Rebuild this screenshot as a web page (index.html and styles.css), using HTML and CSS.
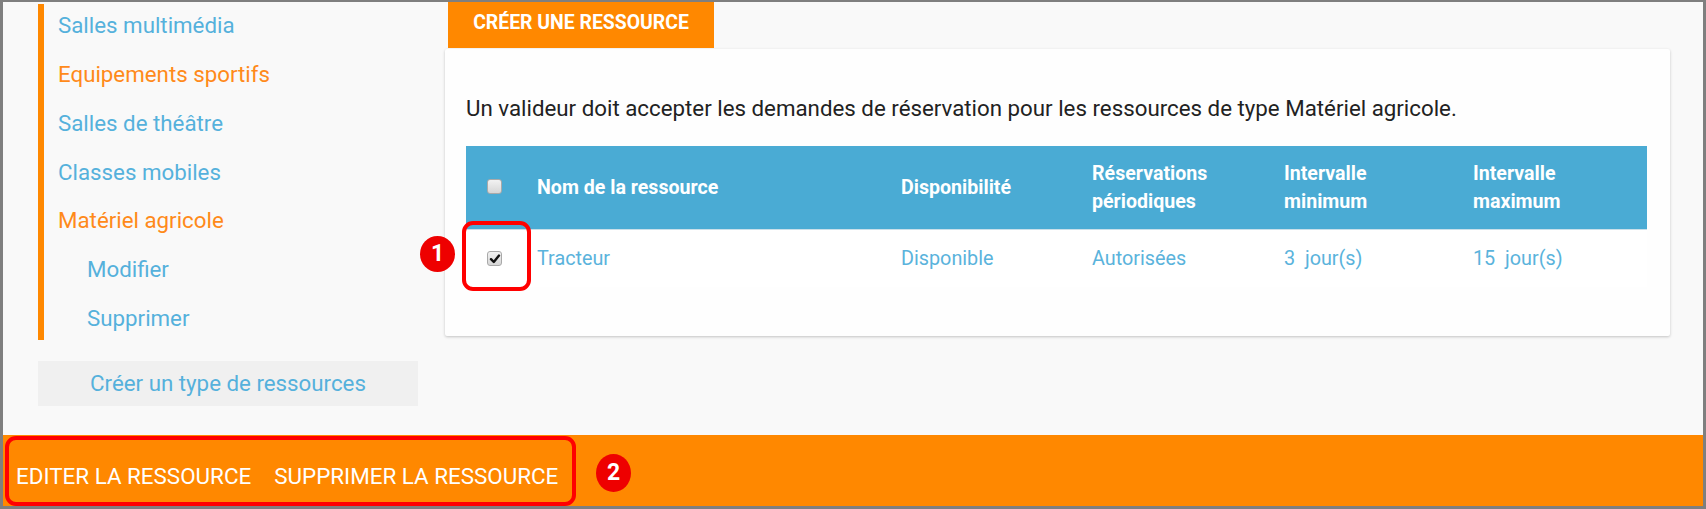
FILE: index.html
```html
<!DOCTYPE html>
<html lang="fr">
<head>
<meta charset="utf-8">
<title>Ressources</title>
<link rel="stylesheet" href="styles.css">
</head>
<body>
<div class="frame">
  <div class="main">
    <aside class="sidebar">
      <nav class="types">
        <a class="item">Salles multimédia</a>
        <a class="item active">Equipements sportifs</a>
        <a class="item">Salles de théâtre</a>
        <a class="item">Classes mobiles</a>
        <a class="item active">Matériel agricole</a>
        <a class="item sub">Modifier</a>
        <a class="item sub last">Supprimer</a>
      </nav>
      <div class="create-type">Créer un type de ressources</div>
    </aside>
    <section class="content">
      <div class="tab">CRÉER UNE RESSOURCE</div>
      <div class="card">
        <p class="desc">Un valideur doit accepter les demandes de réservation pour les ressources de type Matériel agricole.</p>
        <div class="table">
          <div class="row head">
            <div class="cell"><span class="check"></span></div>
            <div class="cell">Nom de la ressource</div>
            <div class="cell">Disponibilité</div>
            <div class="cell">Réservations<br>périodiques</div>
            <div class="cell">Intervalle<br>minimum</div>
            <div class="cell">Intervalle<br>maximum</div>
          </div>
          <div class="row body">
            <div class="cell"><span class="check checked"><svg viewBox="0 0 14 14" width="14" height="14"><path d="M3 7.2 L5.8 10 L11 3.6" fill="none" stroke="#111" stroke-width="2.4" stroke-linecap="round" stroke-linejoin="round"/></svg></span></div>
            <div class="cell">Tracteur</div>
            <div class="cell">Disponible</div>
            <div class="cell">Autorisées</div>
            <div class="cell">3&nbsp; jour(s)</div>
            <div class="cell">15&nbsp; jour(s)</div>
          </div>
        </div>
      </div>
    </section>
  </div>
  <footer class="actions">
    <span class="action">EDITER LA RESSOURCE</span>
    <span class="action">SUPPRIMER LA RESSOURCE</span>
  </footer>
  <div class="mark box1"></div>
  <div class="badge badge1">1</div>
  <div class="mark box2"></div>
  <div class="badge badge2">2</div>
</div>
</body>
</html>
```
FILE: styles.css
```css
* { box-sizing: border-box; }
html, body { margin: 0; padding: 0; }
body {
  font-family: Roboto, "Noto Sans", "Liberation Sans", sans-serif;
  background: #7f7f7f;
}
.frame {
  position: relative;
  width: 1706px;
  height: 509px;
  border-top: 2px solid #7f7f7f;
  border-left: 3px solid #7f7f7f;
  border-right: 3px solid #7f7f7f;
  border-bottom: 3px solid #7f7f7f;
  background: #f9f9f9;
  display: flex;
  flex-direction: column;
}
.main {
  height: 433px;
  display: flex;
  background: #f9f9f9;
}
.sidebar {
  width: 415px;
  padding-left: 35px;
  flex: none;
}
.types {
  margin-top: 2px;
  border-left: 6px solid #ff8800;
  display: flex;
  flex-direction: column;
}
.item {
  display: block;
  height: 43px;
  line-height: 43px;
  margin-bottom: 5.85px;
  padding-left: 14px;
  font-size: 22.3px;
  color: #55b1dc;
  white-space: nowrap;
}
.item.last { margin-bottom: 0; }
.item.active { color: #ff8a1a; }
.item.sub { padding-left: 43px; }
.create-type {
  margin-top: 21px;
  height: 45px;
  line-height: 45px;
  background: #f0f0f0;
  text-align: center;
  font-size: 22.3px;
  color: #55b1dc;
}
.content {
  margin-left: 27px;
  width: 1225px;
  flex: none;
  display: flex;
  flex-direction: column;
}
.tab {
  align-self: flex-start;
  margin-left: 3px;
  width: 266px;
  height: 46px;
  line-height: 42px;
  background: #ff8800;
  color: #fff;
  font-weight: 700;
  font-size: 19.4px;
  text-align: center;
  position: relative;
  z-index: 1;
}
.card {
  margin-top: 1px;
  height: 287px;
  background: #fefefe;
  box-shadow: 0 1px 3px rgba(0,0,0,0.22);
  border-radius: 2px;
  padding: 45px 23px 0 21px;
}
.desc {
  margin: 0;
  font-size: 22.3px;
  line-height: 28px;
  color: #222;
  white-space: nowrap;
}
.table {
  margin-top: 24px;
}
.row {
  display: grid;
  grid-template-columns: 53px 364px 191px 192px 189px 1fr;
  align-items: center;
}
.row.head {
  height: 84px;
  background: #4aabd4;
  color: #fff;
  font-weight: 700;
  font-size: 19.6px;
  line-height: 28px;
  border-bottom: 1px solid #c9dfe9;
}
.row.body {
  height: 57px;
  background: #fff;
  color: #5ab3dc;
  font-size: 19.8px;
}
.cell {
  padding-left: 18px;
  white-space: nowrap;
}
.cell:first-child {
  padding-left: 21px;
  display: flex;
  align-items: center;
}
.check {
  display: block;
  width: 15px;
  height: 15px;
  border: 1px solid #a9a9a9;
  border-radius: 3px;
  background: linear-gradient(#f2f2f2, #d6d6d6);
  position: relative;
}
.row.head .check { margin-top: -3px; }
.check svg {
  position: absolute;
  left: 0;
  top: 0;
}
.actions {
  height: 71px;
  background: #ff8800;
  display: flex;
  align-items: center;
  gap: 23px;
  padding-left: 13px;
  padding-top: 10px;
}
.action {
  color: #fff;
  font-size: 22.4px;
  white-space: nowrap;
}
.mark {
  position: absolute;
  border: 4px solid #ff0000;
  border-radius: 11px;
}
.box1 {
  left: 459px;
  top: 219px;
  width: 69px;
  height: 70px;
}
.box2 {
  left: 2px;
  top: 434px;
  width: 571px;
  height: 70px;
}
.badge {
  position: absolute;
  width: 35px;
  height: 36px;
  border-radius: 50%;
  background: #ee0000;
  color: #fff;
  font-weight: 700;
  font-size: 23px;
  line-height: 36px;
  text-align: center;
}
.badge1 { left: 417px; top: 234px; }
.badge2 { left: 593px; top: 452px; height: 38px; line-height: 38px; }
```
